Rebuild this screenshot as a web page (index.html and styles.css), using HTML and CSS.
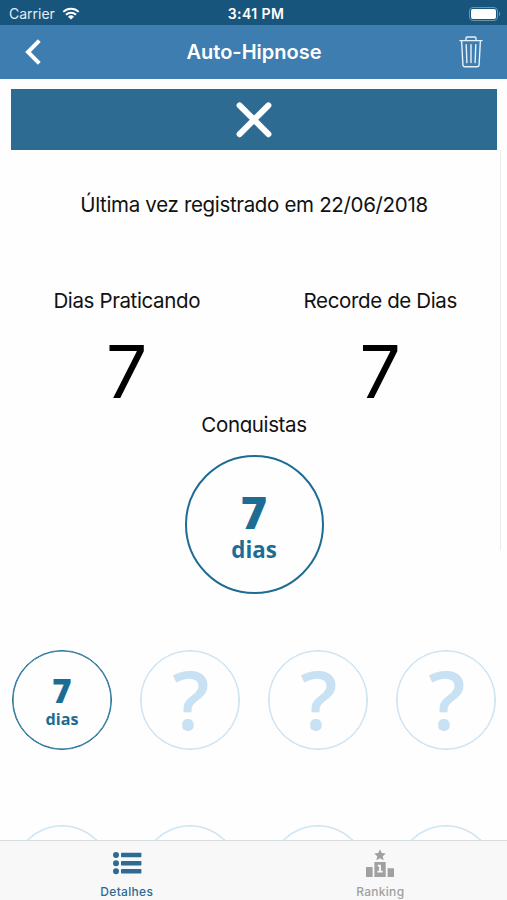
FILE: index.html
```html
<!DOCTYPE html>
<html lang="pt-BR">
<head>
  <meta charset="UTF-8" />
  <meta name="viewport" content="width=device-width, initial-scale=1.0"/>
  <title>Auto-Hipnose</title>
  <link rel="stylesheet" href="styles.css">
</head>
<body>
  <div class="status-bar">
    <div class="carrier">
      <span>Carrier</span>
      <svg class="wifi" viewBox="0 0 18 13" width="18" height="13">
        <path d="M1.3 4.9a11 11 0 0 1 15.4 0M4 7.8a7 7 0 0 1 10 0" fill="none" stroke="#fff" stroke-width="2"/>
        <path d="M9 12.6 6 9.7a4.4 4.4 0 0 1 6 0z" fill="#fff"/>
      </svg>
    </div>
    <div class="clock">3:41 PM</div>
    <svg class="battery" viewBox="0 0 32 14" width="32" height="14">
      <rect x=".5" y=".5" width="28" height="13" rx="3.5" fill="none" stroke="#6d94ad"/>
      <rect x="2" y="2" width="25" height="10" rx="2" fill="#fff"/>
      <path d="M30 4.8v4.4c1.6-.6 1.6-3.8 0-4.4z" fill="#6d94ad"/>
    </svg>
  </div>

  <header class="nav-bar">
    <svg class="back" viewBox="0 0 16 26" width="16" height="26">
      <path d="M14.3 1.6 3 13l11.3 11.4" fill="none" stroke="#fff" stroke-width="4"/>
    </svg>
    <h1>Auto-Hipnose</h1>
    <svg class="trash" viewBox="0 0 24 32" width="24" height="32">
      <g fill="none" stroke="#e6f1f9" stroke-width="1.4" stroke-linecap="round" stroke-linejoin="round">
        <path d="M.9 4.6h22.2M7 4.4V2.3Q7 1 8.3 1h7.4Q17 1 17 2.3v2.1"/>
        <path d="M2.6 4.8l1.3 23.9q.1 2 2.1 2h12q2 0 2.1-2L21.4 4.8"/>
        <path d="M7.2 8.6l.7 18M12 8.6v18M16.8 8.6l-.7 18"/>
      </g>
    </svg>
  </header>

  <main>
    <div class="banner">
      <svg viewBox="0 0 36 36" width="36" height="36">
        <path d="M3.6 3.4l28.8 28.8M32.4 3.4 3.6 32.2" stroke="#fff" stroke-width="6" stroke-linecap="round"/>
      </svg>
    </div>

    <p class="last">Última vez registrado em 22/06/2018</p>

    <div class="stats">
      <div class="stat">
        <div class="label">Dias Praticando</div>
        <div class="number">7</div>
      </div>
      <div class="stat">
        <div class="label">Recorde de Dias</div>
        <div class="number">7</div>
      </div>
    </div>

    <h2>Conquistas</h2>

    <div class="badge badge-large"><b>7</b><span>dias</span></div>

    <div class="grid">
      <div class="badge"><b>7</b><span>dias</span></div>
      <div class="badge locked">?</div>
      <div class="badge locked">?</div>
      <div class="badge locked">?</div>
      <div class="badge locked"></div>
      <div class="badge locked"></div>
      <div class="badge locked"></div>
      <div class="badge locked"></div>
    </div>
    <div class="scrollbar"></div>
  </main>

  <nav class="tab-bar">
    <div class="tab active">
      <svg viewBox="0 0 30 30" width="30" height="30" fill="currentColor">
        <circle cx="4" cy="6" r="3"/><circle cx="4" cy="14.2" r="3"/><circle cx="4" cy="22.2" r="3"/>
        <rect x="9" y="3.8" width="20.4" height="4.4" rx=".7"/>
        <rect x="9" y="12" width="20.4" height="4.4" rx=".7"/>
        <rect x="9" y="20" width="20.4" height="4.4" rx=".7"/>
      </svg>
      <span>Detalhes</span>
    </div>
    <div class="tab">
      <svg viewBox="0 0 30 30" width="30" height="30" fill="currentColor">
        <path d="M15 .3l1.7 3.7 4.1.5-3 2.8.8 4L15 9.3l-3.6 2 .8-4-3-2.8 4.1-.5z"/>
        <path d="M9.4 13h11.3v15H9.4zM1 18h6.6v10H1zM22.6 19.3H29V28h-6.4z"/>
        <path d="M12.7 16.6h2.3v6M12.4 22.6h5.4" fill="none" stroke="#f8f8f8" stroke-width="1.9"/>
      </svg>
      <span>Ranking</span>
    </div>
  </nav>
</body>
</html>
```
FILE: styles.css
```css
:root {
  font-family: Inter, "Liberation Sans", sans-serif;
  --status: #17557c;
  --nav: #3e7db0;
  --banner: #2d6b92;
  --badge: #1c6c94;
  --locked: #c8e1f3;
}

* {
  box-sizing: border-box;
}

body {
  display: flex;
  flex-direction: column;
  height: 100vh;
  margin: 0;
  overflow: hidden;
  background: #fefefe;
  color: #111;
}

.status-bar {
  display: grid;
  grid-template-columns: 1fr auto 1fr;
  align-items: center;
  flex: none;
  height: 25px;
  padding: 2px 6px 0 9px;
  background: var(--status);
  color: #fff;
  font-size: 14px;
}

.carrier {
  display: flex;
  align-items: center;
  gap: 7px;
  color: #e3edf3;
}

.clock {
  font-size: 14px;
  font-weight: 600;
  letter-spacing: 0.4px;
  padding-left: 2px;
}

.battery {
  justify-self: end;
}

.nav-bar {
  display: flex;
  align-items: center;
  justify-content: space-between;
  flex: none;
  height: 54px;
  padding: 0 24px 0 25px;
  background: var(--nav);
  color: #fff;
}

.nav-bar h1 {
  margin: 0 0 0 8px;
  font-size: 20px;
  font-weight: 600;
}

main {
  position: relative;
  flex: 1;
  min-height: 0;
  padding: 10px 10px 0 11px;
  overflow: hidden;
}

.banner {
  display: flex;
  align-items: center;
  justify-content: center;
  height: 61px;
  background: var(--banner);
}

.last {
  margin: 42px 0 0;
  font-size: 20.5px;
  letter-spacing: -0.33px;
  line-height: 26px;
  text-align: center;
}

.stats {
  display: flex;
  margin: 70px -10px 0 -11px;
}

.stat {
  flex: 1;
  text-align: center;
}

.label {
  font-size: 20.5px;
  letter-spacing: -0.37px;
  line-height: 26px;
}

.number {
  margin-top: 18px;
  font-size: 73px;
  line-height: 79px;
  color: #000;
}

h2 {
  height: 22px;
  margin: 0;
  overflow: hidden;
  font-size: 20.5px;
  font-weight: 400;
  letter-spacing: -0.37px;
  line-height: 27px;
  text-align: center;
}

.badge {
  display: flex;
  flex-direction: column;
  align-items: center;
  justify-content: center;
  width: 100px;
  height: 100px;
  border: 1px solid var(--badge);
  border-radius: 50%;
  box-shadow: inset 0 0 0 0.6px var(--badge);
  color: var(--badge);
  font-family: "Open Sans", sans-serif;
  font-size: 16.2px;
  font-weight: 700;
  line-height: 20px;
}

.badge b {
  margin-top: 2px;
  font-size: 33px;
  line-height: 36px;
}

.badge-large {
  width: 139px;
  height: 139px;
  margin: 22px auto 0;
  border-width: 2px;
  box-shadow: none;
  font-size: 22.3px;
  line-height: 28px;
}

.badge-large b {
  margin-top: 3px;
  font-size: 45px;
  line-height: 48px;
}

.locked {
  padding: 0 0 4px 2px;
  border-color: var(--locked);
  box-shadow: inset 0 0 0 0.6px var(--locked);
  color: var(--locked);
  font-size: 82px;
  font-weight: 600;
  line-height: 94px;
}

.grid {
  display: grid;
  grid-template-columns: repeat(4, 100px);
  gap: 75px 28px;
  margin: 56px 0 0 1px;
}

.scrollbar {
  position: absolute;
  top: 71px;
  right: 6px;
  width: 1px;
  height: 400px;
  background: #ececec;
}

.tab-bar {
  display: flex;
  flex: none;
  height: 60px;
  border-top: 1px solid #d9dcde;
  background: #f8f8f8;
}

.tab {
  display: flex;
  flex: 1;
  flex-direction: column;
  align-items: center;
  padding-top: 8px;
  color: #a0a0a0;
  font-size: 12px;
  font-weight: 500;
  letter-spacing: 0.3px;
}

.tab span {
  margin-top: 5px;
  line-height: 16px;
}

.tab.active {
  color: #2d6b92;
}
```
